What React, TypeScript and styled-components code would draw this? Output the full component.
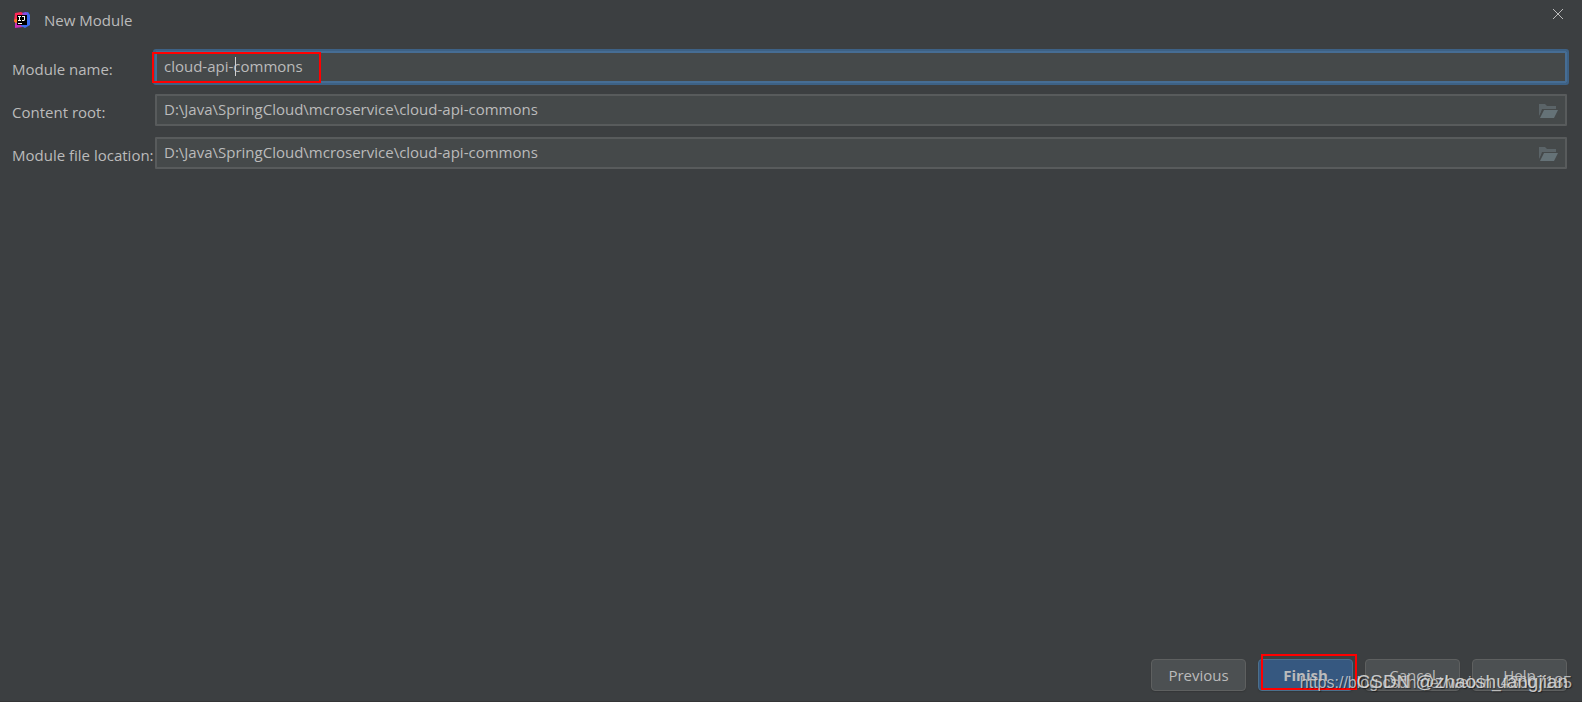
import React from 'react';
import styled, { createGlobalStyle } from 'styled-components';

const GlobalStyle = createGlobalStyle`
  * { box-sizing: border-box; }
  body {
    margin: 0;
    background: #3c3f41;
    color: #bbbbbb;
    font: 15px/20px 'Open Sans', 'Noto Sans', sans-serif;
  }
`;

const Dialog = styled.main`
  position: relative;
  display: flex;
  flex-direction: column;
  min-height: 100vh;
  border-bottom: 1px solid #353536;
`;

const TitleBar = styled.header`
  display: flex;
  align-items: center;
  gap: 12px;
  height: 40px;
  padding: 0 18px 0 12px;
`;

const Title = styled.h1`
  flex: 1;
  margin: 0;
  font-size: 15px;
  font-weight: 400;
`;

const CloseButton = styled.button`
  display: flex;
  align-self: flex-start;
  margin-top: 8px;
  padding: 0;
  border: 0;
  background: none;
  color: #bbbbbb;
`;

const Form = styled.form`
  display: flex;
  flex: 1;
  flex-direction: column;
  padding: 11px 15px 10px 12px;
`;

const Fields = styled.div`
  display: grid;
  gap: 11px;
`;

const FieldRow = styled.div`
  display: grid;
  grid-template-columns: 143px 1fr;
`;

const Label = styled.label`
  padding-top: 8px;
  white-space: nowrap;
`;

const InputBox = styled.div<{ $focused?: boolean }>`
  position: relative;
  display: flex;
  align-items: center;
  height: 32px;
  padding: 0 7px 2px;
  border: 2px solid ${p => (p.$focused ? '#466d94' : '#585b5c')};
  outline: ${p => (p.$focused ? '2px solid #3d6185' : 'none')};
  border-radius: 1px;
  background: #45494a;
`;

const TextInput = styled.input`
  flex: 1;
  min-width: 0;
  height: 24px;
  padding: 0;
  border: 0;
  outline: 0;
  background: none;
  color: inherit;
  font: inherit;
`;

const BrowseButton = styled.button`
  display: flex;
  padding: 4px 0 0;
  border: 0;
  background: none;
`;

const Caret = styled.span`
  position: absolute;
  top: 4px;
  left: 78px;
  width: 1px;
  height: 19px;
  background: #d0d0d0;
`;

const NameHighlight = styled.span`
  position: absolute;
  top: -1px;
  left: -5px;
  width: 169px;
  height: 31px;
  border: 2px solid #ff0000;
  pointer-events: none;
`;

const Footer = styled.footer`
  display: flex;
  justify-content: flex-end;
  gap: 12px;
  margin-top: auto;
`;

const Button = styled.button<{ $primary?: boolean }>`
  position: relative;
  width: 95px;
  height: 32px;
  padding: 0 0 1px;
  border: 1px solid ${p => (p.$primary ? '#4c708c' : '#5e6060')};
  border-radius: 4px;
  background: ${p => (p.$primary ? '#365880' : '#4c5052')};
  box-shadow: 0 1px 1px #353739;
  color: inherit;
  font: inherit;
  font-weight: ${p => (p.$primary ? 700 : 400)};
`;

const FinishHighlight = styled.span`
  position: absolute;
  top: -6px;
  left: 2px;
  width: 96px;
  height: 36px;
  border: 2px solid #ff0000;
  pointer-events: none;
`;

const Watermark = styled.span<{ $large?: boolean }>`
  position: absolute;
  right: ${p => (p.$large ? '14px' : '10px')};
  bottom: ${p => (p.$large ? '9px' : '8px')};
  color: ${p => (p.$large ? 'rgba(225, 225, 225, 0.85)' : 'rgba(215, 215, 215, 0.8)')};
  font-family: 'Liberation Sans', Arial, sans-serif;
  font-size: ${p => (p.$large ? '19px' : '16px')};
  text-shadow: 1px 1px 1px rgba(0, 0, 0, 0.4);
  white-space: nowrap;
  pointer-events: none;
`;

const Logo = () => (
  <svg width="20" height="20" viewBox="0 0 20 20" aria-hidden="true">
    <path d="M3 3 9 2l4 2-3 7-8 1z" fill="#fe2857" />
    <path d="m2 10 4-2 1 6-3 1z" fill="#fc801d" />
    <path d="m3 13 5-1 3 5-8 1z" fill="#c92fb9" />
    <path d="m11 3 5-1 2 3v10l-5 3-4-2z" fill="#3b6cf0" />
    <path d="m10 3 4-1 2 2-4 3z" fill="#8a4de0" />
    <path d="M5 5h10v10H5z" fill="#000" />
    <path d="M6 6h3v1H8v3h1v1H6v-1h1V7H6zM10 6h3v4l-1 1h-2v-1h2V7h-2zM6 13h4v1H6z" fill="#fff" />
  </svg>
);

const FolderIcon = () => (
  <svg width="19" height="14" viewBox="0 0 19 14" aria-hidden="true">
    <path d="M0 0h6l2 2h9v3H4L0 12z" fill="#5b6468" />
    <path d="M3 5h14v2H4L1 14H0z" fill="#45494a" />
    <path d="M5 6h14l-4 8H1z" fill="#657277" />
  </svg>
);

const paths = [
  { id: 'content-root', label: 'Content root:' },
  { id: 'file-location', label: 'Module file location:' },
];

export default function App() {
  return (
    <>
      <GlobalStyle />
      <Dialog>
        <TitleBar>
          <Logo />
          <Title>New Module</Title>
          <CloseButton type="button" aria-label="Close">
            <svg width="12" height="12" viewBox="0 0 12 12" aria-hidden="true">
              <path d="m1 1 10 10M11 1 1 11" stroke="currentColor" fill="none" />
            </svg>
          </CloseButton>
        </TitleBar>
        <Form onSubmit={e => e.preventDefault()}>
          <Fields>
            <FieldRow>
              <Label htmlFor="module-name">Module name:</Label>
              <InputBox $focused>
                <TextInput id="module-name" defaultValue="cloud-api-commons" spellCheck={false} />
                <Caret />
                <NameHighlight />
              </InputBox>
            </FieldRow>
            {paths.map(p => (
              <FieldRow key={p.id}>
                <Label htmlFor={p.id}>{p.label}</Label>
                <InputBox>
                  <TextInput
                    id={p.id}
                    defaultValue={'D:\\Java\\SpringCloud\\mcroservice\\cloud-api-commons'}
                    spellCheck={false}
                  />
                  <BrowseButton type="button" aria-label="Browse">
                    <FolderIcon />
                  </BrowseButton>
                </InputBox>
              </FieldRow>
            ))}
          </Fields>
          <Footer>
            <Button type="button">Previous</Button>
            <Button type="submit" $primary>
              Finish
              <FinishHighlight />
            </Button>
            <Button type="button">Cancel</Button>
            <Button type="button">Help</Button>
          </Footer>
        </Form>
        <Watermark>https://blog.csdn.net/weixin_43607185</Watermark>
        <Watermark $large>CSDN @zhaoshuangjian</Watermark>
      </Dialog>
    </>
  );
}
